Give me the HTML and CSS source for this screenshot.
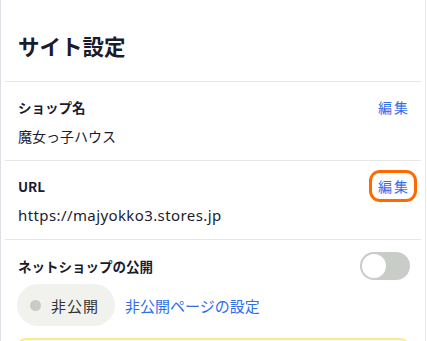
FILE: index.html
```html
<!DOCTYPE html>
<html lang="ja">
<head>
<meta charset="utf-8">
<title>サイト設定</title>
<link rel="stylesheet" href="styles.css">
</head>
<body>
<div class="card">
  <div class="section title-section">
    <h1 class="title">サイト設定</h1>
  </div>
  <div class="section row">
    <div class="row-head">
      <span class="label">ショップ名</span>
      <button class="edit">編集</button>
    </div>
    <div class="value jp">魔女っ子ハウス</div>
  </div>
  <div class="section row">
    <div class="row-head">
      <span class="label">URL</span>
      <button class="edit focused">編集</button>
    </div>
    <div class="value">https://majyokko3.stores.jp</div>
  </div>
  <div class="section publish">
    <div class="row-head toggle-head">
      <span class="label">ネットショップの公開</span>
      <span class="toggle"><span class="knob"></span></span>
    </div>
    <div class="status-line">
      <span class="pill"><span class="dot"></span>非公開</span>
      <a class="link" href="#">非公開ページの設定</a>
    </div>
    <div class="notice"></div>
  </div>
</div>
</body>
</html>
```

FILE: styles.css
```css
html, body {
  margin: 0;
  padding: 0;
  background: #ffffff;
}
body {
  font-family: "Noto Sans", "Noto Sans CJK JP", sans-serif;
  color: #1b1b2f;
  overflow: hidden;
}
.card {
  width: 424px;
  height: 341px;
  overflow: hidden;
  border-left: 1px solid #dedfe6;
  border-right: 1px solid #e3e8ef;
  background: #fff;
}
.section {
  margin: 0 4px;
  padding: 0 11px 0 13px;
  border-bottom: 1px solid #e6e6e6;
}
.title-section {
  padding-top: 31px;
  padding-bottom: 20px;
}
.title {
  margin: 0;
  font-size: 21.5px;
  line-height: 30px;
  font-weight: 700;
  font-family: "Noto Sans CJK JP", sans-serif;
}
.row {
  padding-top: 13px;
  padding-bottom: 13px;
}
.row-head {
  display: flex;
  align-items: center;
  justify-content: space-between;
  height: 24px;
}
.label {
  font-family: "Noto Sans CJK JP", sans-serif;
  font-size: 13.5px;
  font-weight: 700;
  line-height: 20px;
}
.edit {
  font-family: "Noto Sans CJK JP", sans-serif;
  font-size: 14px;
  line-height: 20px;
  letter-spacing: 2px;
  color: #2f6ee8;
  background: #fff;
  border: none;
  padding: 3px 4px 3px 6px;
  margin-right: -4px;
  border-radius: 8px;
}
.edit.focused {
  box-shadow: 0 0 0 3px #ff6a00;
}
.value {
  margin-top: 6px;
  font-size: 15px;
  line-height: 22px;
  letter-spacing: 0.4px;
}
.value.jp {
  font-family: "Noto Sans CJK JP", sans-serif;
  font-size: 14px;
  letter-spacing: 0;
}
.publish {
  border-bottom: none;
  padding-top: 12px;
}
.toggle-head {
  height: 28px;
}
.toggle {
  display: flex;
  align-items: center;
  width: 50px;
  height: 28px;
  border-radius: 14px;
  background: #c9cdc8;
  box-sizing: border-box;
  padding: 2px;
}
.knob {
  width: 24px;
  height: 24px;
  border-radius: 50%;
  background: #fff;
}
.status-line {
  display: flex;
  align-items: center;
  gap: 10px;
  margin-top: 4px;
}
.pill {
  display: inline-flex;
  align-items: center;
  height: 42px;
  padding: 0 16px 0 13px;
  margin-left: -1px;
  border-radius: 21px;
  background: #f1f2ee;
  font-family: "Noto Sans CJK JP", sans-serif;
  font-size: 15px;
  letter-spacing: 1px;
  color: #333;
}
.dot {
  width: 11px;
  height: 11px;
  border-radius: 50%;
  background: #c8cbc6;
  margin-right: 10px;
}
.link {
  font-family: "Noto Sans CJK JP", sans-serif;
  font-size: 15px;
  color: #2f6ee8;
  text-decoration: none;
}
.notice {
  margin-top: 12px;
  margin-left: -2px;
  height: 40px;
  border-radius: 10px;
  background: #fffbe3;
  border: 2px solid #fde98a;
}
```
